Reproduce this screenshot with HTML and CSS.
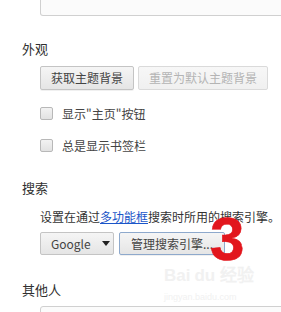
FILE: index.html
```html
<!DOCTYPE html>
<html lang="zh-CN">
<head>
<meta charset="utf-8">
<link rel="stylesheet" href="styles.css">
</head>
<body>
<div class="page">
  <div class="panel panel-top"></div>

  <section class="section sec-appearance">
    <h2 class="heading">外观</h2>
    <div class="body">
      <div class="btn-row">
        <button class="btn">获取主题背景</button>
        <button class="btn" disabled>重置为默认主题背景</button>
      </div>
      <div class="check-list">
        <label class="check"><span class="cb"></span><span>显示&quot;主页&quot;按钮</span></label>
        <label class="check"><span class="cb"></span><span>总是显示书签栏</span></label>
      </div>
    </div>
  </section>

  <section class="section sec-search">
    <h2 class="heading">搜索</h2>
    <div class="body">
      <p class="desc">设置在通过<a class="link" href="#">多功能框</a>搜索时所用的搜索引擎。</p>
      <div class="btn-row small">
        <div class="select"><span>Google</span><span class="arrow"></span></div>
        <button class="btn focus">管理搜索引擎...</button>
      </div>
    </div>
  </section>

  <section class="section sec-people">
    <h2 class="heading">其他人</h2>
    <div class="panel panel-bottom"></div>
  </section>

  <div class="wm wm-logo">Bai<span class="wm-du">du</span> 经验</div>
  <div class="wm wm-url">jingyan.baidu.com</div>
  <div class="big-three">3</div>
</div>
</body>
</html>
```

FILE: styles.css
```css
* { box-sizing: border-box; }
html, body {
  margin: 0;
  padding: 0;
  background: #ffffff;
}
body {
  font-family: "Noto Sans CJK SC", "Noto Sans", sans-serif;
  font-size: 12px;
  color: #333333;
  overflow: hidden;
}
.page {
  position: relative;
  width: 281px;
  height: 312px;
  overflow: hidden;
}
.panel {
  margin-left: 40px;
  margin-right: -10px;
  background: #fbfbfb;
  border: 1px solid #d0d0d0;
  border-radius: 3px;
}
.panel-top {
  height: 18px;
  margin-top: -2px;
  border-top: none;
  border-top-left-radius: 0;
}
.section { padding-left: 22px; }
.sec-appearance { margin-top: 24px; }
.sec-search { margin-top: 24px; }
.sec-people { margin-top: 26px; padding-left: 0; }
.sec-people .heading { padding-left: 22px; }
.heading {
  margin: 0;
  font-size: 13px;
  font-weight: normal;
  line-height: 18px;
  height: 18px;
  color: #303030;
}
.body { padding-left: 18px; }
.sec-appearance .body { padding-top: 8px; }
.btn-row {
  display: flex;
  gap: 4px;
  align-items: center;
}
.btn {
  height: 24px;
  padding: 0 10px;
  font-family: inherit;
  font-size: 12px;
  line-height: 22px;
  color: #444444;
  background: linear-gradient(#f5f5f5, #e5e5e5);
  border: 1px solid #c4c4c4;
  border-radius: 2px;
  box-shadow: 0 1px 0 rgba(0,0,0,0.06);
}
.btn[disabled] {
  color: #b4b4b4;
  background: linear-gradient(#f7f7f7, #f0f0f0);
  border-color: #dadada;
  box-shadow: none;
}
.check-list {
  display: flex;
  flex-direction: column;
  gap: 12px;
  margin-top: 13px;
}
.check {
  display: flex;
  align-items: center;
  height: 20px;
  color: #444444;
}
.cb {
  width: 13px;
  height: 13px;
  margin-right: 9px;
  border: 1px solid #b8b8b8;
  border-radius: 2px;
  background: linear-gradient(#f2f2f2, #e2e2e2);
}
.desc {
  margin: 11px 0 0 0;
  line-height: 18px;
  color: #333333;
  white-space: nowrap;
}
.link {
  color: #1a55c8;
  text-decoration: underline;
}
.btn-row.small { margin-top: 6px; gap: 5px; }
.btn-row.small .btn {
  height: 23px;
  line-height: 21px;
  padding: 0 11px;
}
.select {
  display: flex;
  align-items: center;
  width: 74px;
  height: 23px;
  padding-left: 10px;
  color: #444444;
  background: linear-gradient(#f5f5f5, #e5e5e5);
  border: 1px solid #c4c4c4;
  border-radius: 2px;
}
.arrow {
  margin-left: 11px;
  width: 0;
  height: 0;
  border-left: 4px solid transparent;
  border-right: 4px solid transparent;
  border-top: 5px solid #222222;
}
.btn.focus {
  border-color: #8ea9cc;
}
.panel-bottom {
  height: 20px;
  margin-top: 7px;
}
.big-three {
  position: absolute;
  left: 210px;
  top: 216px;
  font-family: "Liberation Sans", Arial, sans-serif;
  font-weight: bold;
  font-size: 62px;
  line-height: 46px;
  color: #e2161d;
  -webkit-text-stroke: 0.6px #e2161d;
}
.wm {
  position: absolute;
  color: #f1f1f1;
  font-family: "Liberation Sans", sans-serif;
  pointer-events: none;
}
.wm-logo {
  left: 164px;
  top: 266px;
  font-size: 17px;
  font-weight: bold;
  line-height: 19px;
}
.wm-du { margin-left: 4px; }
.wm-url {
  left: 164px;
  top: 292px;
  font-size: 9px;
  line-height: 10px;
}
```
